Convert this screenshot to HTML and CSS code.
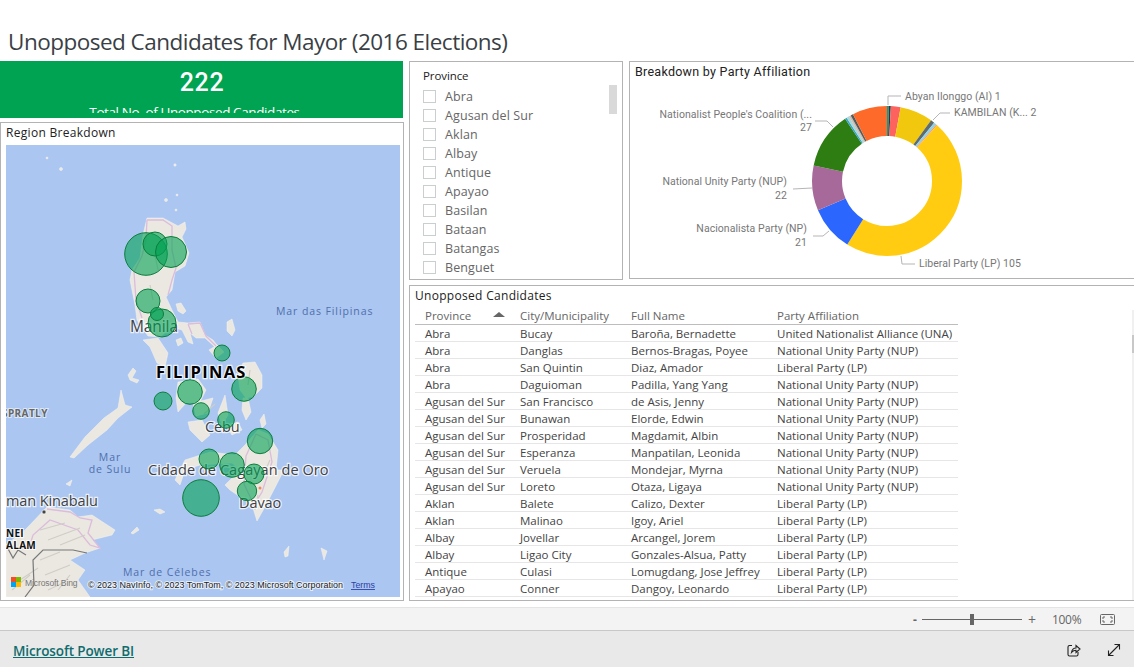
FILE: index.html
```html
<!DOCTYPE html>
<html lang="en">
<head>
<meta charset="utf-8">
<title>Unopposed Candidates for Mayor (2016 Elections)</title>
<link rel="stylesheet" href="styles.css">
</head>
<body>
<main class="canvas">
  <h1 class="page-title">Unopposed Candidates for Mayor (2016 Elections)</h1>
  <div class="board">
    <div class="left-col">
      <section class="kpi">
        <div class="kpi-clip">
          <div class="kpi-value">222</div>
          <div class="kpi-label">Total No. of Unopposed Candidates</div>
        </div>
      </section>
      <section class="tile region">
        <h2 class="tile-title">Region Breakdown</h2>
        <svg class="map" viewBox="6 145 394 452" width="394" height="452" role="img" aria-label="Map of the Philippines">
          <rect class="sea" x="6" y="145" width="394" height="452"/>
          <g class="land">
            <path d="M147 218 163 218 178 226 185 222 186 229 182 237 189 253 185 266 175 272 172 290 166 297 172 310 178 322 188 323 200 322 205 335 213 340 220 349 216 348 205 338 196 338 190 333 193 344 188 342 182 330 172 327 160 337 148 336 137 320 135 305 130 280 132 270 140 258 143 235Z"/>
            <path d="M143 340 158 338 168 353 165 367 157 363 150 347Z"/>
            <path d="M243 363 255 362 262 375 262 388 254 396 246 398 240 390 238 375Z"/>
            <path d="M243 398 248 398 251 412 246 420 242 410Z"/>
            <path d="M178 382 198 379 206 390 200 402 186 403 178 412 176 398Z"/>
            <path d="M193 403 213 398 208 413 196 416Z"/>
            <path d="M188 422 202 420 210 435 202 442 190 430Z"/>
            <path d="M218 413 225 395 228 415 222 425Z"/>
            <path d="M226 426 238 422 242 430 232 435Z"/>
            <path d="M258 430 268 434 278 450 276 470 284 470 266 505 257 521 252 505 230 490 225 485 240 470 232 463 200 465 185 470 180 485 175 480 185 460 210 452 235 455 245 445Z"/>
            <path d="M70 457 85 437 104 418 118 408 121 390 125 405 132 407 118 418 107 430 88 445 74 458Z"/>
            <path d="M6 545 25 530 47 507 70 510 78 517 92 515 115 530 112 535 92 540 100 548 85 553 70 560 85 570 78 580 90 597 6 597Z"/>
            <path d="M176 304 181 303 186 311 183 314 178 311Z"/>
            <path d="M227 322 232 319 235 330 232 336 227 331Z"/>
            <path d="M176 340 181 338 183 343 178 346Z"/>
            <path d="M209 350 217 345 224 352 216 358Z"/>
            <path d="M128 375 133 368 136 371 132 378 139 380 137 383 130 380Z"/>
            <path d="M260 420 264 414 266 424 262 428Z"/>
            <path d="M154 510 160 509 165 512 160 514Z"/>
            <path d="M66 484 72 480 70 486Z"/>
            <path d="M131 533 137 527 139 530 133 534Z"/>
            <path d="M284 552 289 546 288 556 285 557Z"/>
            <path d="M321 548 327 551 324 560Z"/>
            <circle cx="47" cy="158" r="1"/><circle cx="61" cy="169" r="1.5"/><circle cx="175" cy="165" r="1.2"/>
            <circle cx="166" cy="200" r="1.5"/><circle cx="177" cy="195" r="1"/><circle cx="176" cy="210" r="1"/>
          </g>
          <g class="province-lines">
            <path d="M147 220 163 220 172 226 172 250 176 268 172 280 168 295M147 220 146 240 142 256 134 272 136 300 142 318"/>
            <path d="M188 324 200 323 206 336 216 346M188 324 192 334"/>
            <path d="M256 434 268 440 272 462 262 492 254 505 244 484 246 456 256 434"/>
            <path d="M47 509 70 512 80 518 92 520 88 533 100 548 90 545 78 530 50 520 33 535 30 545"/>
          </g>
          <g class="relief">
            <path d="M155 255 158 270M150 285 153 300M250 370 248 385M215 404 204 414M270 460 262 478M255 510 258 495M40 530 65 523M48 540 80 528M20 580 38 568M45 575 70 565M48 590 65 582M60 545 85 535M12 590 30 575M40 560 60 552M70 575 58 590"/>
          </g>
          <g class="country-border">
            <path d="M25 597 34 585 33 560 43 550 73 550 87 553"/>
            <path d="M6 545 13 558 18 550 26 555"/>
          </g>
          <text class="sea-label" x="276" y="315">Mar das Filipinas</text>
          <text class="sea-label" x="110" y="461" text-anchor="middle">Mar</text>
          <text class="sea-label" x="110" y="473" text-anchor="middle">de Sulu</text>
          <text class="sea-label" x="123" y="576">Mar de Célebes</text>
          <text class="region-label" x="2" y="417">SPRATLY</text>
          <text class="city-label city-big" x="130" y="332">Manila</text>
          <text class="city-label" x="205" y="432">Cebu</text>
          <text class="city-label city-wide" x="148" y="475">Cidade de Cagayan de Oro</text>
          <text class="city-label" x="239" y="508">Davao</text>
          <text class="city-label" x="6" y="506">man Kinabalu</text>
          <circle class="city-dot" cx="44" cy="512" r="2"/>
          <circle class="city-dot-orange" cx="260" cy="488" r="1.5"/>
          <text class="small-country" x="6" y="537">NEI</text>
          <text class="small-country" x="6" y="549">ALAM</text>
          <g class="bubbles">
            <circle cx="146" cy="254" r="21.3"/><circle cx="155" cy="244" r="12"/><circle cx="171" cy="252" r="15.5"/>
            <circle cx="148" cy="301" r="12"/><circle cx="162" cy="323" r="14"/><circle cx="157" cy="314" r="6.5"/>
            <circle cx="222" cy="353" r="8"/><circle cx="190" cy="392" r="12.3"/><circle cx="244" cy="389" r="12.3"/>
            <circle cx="163" cy="401" r="9"/><circle cx="201" cy="411" r="8.3"/><circle cx="226" cy="420" r="8.3"/>
            <circle cx="260" cy="441" r="12.7"/><circle cx="209" cy="459" r="10"/><circle cx="232" cy="465" r="12.3"/>
            <circle cx="254" cy="474" r="10"/><circle cx="247" cy="491" r="9.7"/><circle cx="201" cy="498" r="18.3"/>
          </g>
          <text class="country-label" x="156" y="378">FILIPINAS</text>
          <rect class="ms-red" x="11" y="577" width="5" height="5"/>
          <rect class="ms-green" x="16" y="577" width="5" height="5"/>
          <rect class="ms-blue" x="11" y="582" width="5" height="5"/>
          <rect class="ms-yellow" x="16" y="582" width="5" height="5"/>
          <text class="bing-label" x="25" y="586">Microsoft Bing</text>
          <text class="attribution" x="88" y="588">© 2023 NavInfo, © 2023 TomTom, © 2023 Microsoft Corporation</text>
          <text class="terms" x="351" y="588">Terms</text>
        </svg>
      </section>
    </div>

    <div class="right-col">
      <div class="top-row">
        <section class="tile slicer">
          <h2 class="slicer-title">Province</h2>
          <ul class="slicer-list">
            <li><span class="check"></span>Abra</li>
            <li><span class="check"></span>Agusan del Sur</li>
            <li><span class="check"></span>Aklan</li>
            <li><span class="check"></span>Albay</li>
            <li><span class="check"></span>Antique</li>
            <li><span class="check"></span>Apayao</li>
            <li><span class="check"></span>Basilan</li>
            <li><span class="check"></span>Bataan</li>
            <li><span class="check"></span>Batangas</li>
            <li><span class="check"></span>Benguet</li>
          </ul>
          <span class="slicer-thumb"></span>
        </section>
        <section class="tile party">
          <h2 class="party-title">Breakdown by Party Affiliation</h2>
          <svg class="donut" viewBox="630 80 504 198" width="504" height="198" role="img" aria-label="Donut chart by party">
            <g class="rings" fill="none" stroke-width="30" transform="rotate(-90 887 180)">
              <circle cx="887" cy="180" r="60" pathLength="360" stroke="#0f9d8c" stroke-dasharray="1.5 360"/>
              <circle cx="887" cy="180" r="60" pathLength="360" stroke="#1f3a3a" stroke-dasharray="1.5 360" stroke-dashoffset="-1.5"/>
              <circle cx="887" cy="180" r="60" pathLength="360" stroke="#fd625e" stroke-dasharray="7.5 360" stroke-dashoffset="-3"/>
              <circle cx="887" cy="180" r="60" pathLength="360" stroke="#f2c80f" stroke-dasharray="25.5 360" stroke-dashoffset="-10.5"/>
              <circle cx="887" cy="180" r="60" pathLength="360" stroke="#5f6b6d" stroke-dasharray="3 360" stroke-dashoffset="-36"/>
              <circle cx="887" cy="180" r="60" pathLength="360" stroke="#8ad4eb" stroke-dasharray="2 360" stroke-dashoffset="-39"/>
              <circle cx="887" cy="180" r="60" pathLength="360" stroke="#fe9666" stroke-dasharray="1 360" stroke-dashoffset="-41"/>
              <circle cx="887" cy="180" r="60" pathLength="360" stroke="#ffcc12" stroke-dasharray="170 360" stroke-dashoffset="-42"/>
              <circle cx="887" cy="180" r="60" pathLength="360" stroke="#2b67ff" stroke-dasharray="35 360" stroke-dashoffset="-212"/>
              <circle cx="887" cy="180" r="60" pathLength="360" stroke="#a66999" stroke-dasharray="35 360" stroke-dashoffset="-247"/>
              <circle cx="887" cy="180" r="60" pathLength="360" stroke="#2e7d12" stroke-dasharray="44 360" stroke-dashoffset="-282"/>
              <circle cx="887" cy="180" r="60" pathLength="360" stroke="#3aa6c4" stroke-dasharray="1.5 360" stroke-dashoffset="-326"/>
              <circle cx="887" cy="180" r="60" pathLength="360" stroke="#a8d8d8" stroke-dasharray="2 360" stroke-dashoffset="-327.5"/>
              <circle cx="887" cy="180" r="60" pathLength="360" stroke="#d6b8b0" stroke-dasharray="1.5 360" stroke-dashoffset="-329.5"/>
              <circle cx="887" cy="180" r="60" pathLength="360" stroke="#4f5f5f" stroke-dasharray="2 360" stroke-dashoffset="-331"/>
              <circle cx="887" cy="180" r="60" pathLength="360" stroke="#fe6a2a" stroke-dasharray="27 360" stroke-dashoffset="-333"/>
            </g>
            <g class="leaders" fill="none">
              <path d="M888 104V95H901"/>
              <path d="M933 119 940 112H950"/>
              <path d="M815 120H827L833 126"/>
              <path d="M793 188 812 187"/>
              <path d="M813 235H823L829 230"/>
              <path d="M901 255 902 263H915"/>
            </g>
            <g class="chart-labels">
              <text x="905" y="99">Abyan Ilonggo (AI) 1</text>
              <text x="954" y="115">KAMBILAN (K... 2</text>
              <text x="812" y="117" text-anchor="end">Nationalist People's Coalition (...</text>
              <text x="812" y="130" text-anchor="end">27</text>
              <text x="787" y="184" text-anchor="end">National Unity Party (NUP)</text>
              <text x="787" y="198" text-anchor="end">22</text>
              <text x="807" y="231" text-anchor="end">Nacionalista Party (NP)</text>
              <text x="807" y="245" text-anchor="end">21</text>
              <text x="919" y="266">Liberal Party (LP) 105</text>
            </g>
          </svg>
        </section>
      </div>
      <section class="tile candidates">
        <h2 class="tile-title">Unopposed Candidates</h2>
        <table class="grid">
          <colgroup><col class="c1"><col class="c2"><col class="c3"><col class="c4"></colgroup>
          <thead>
            <tr><th class="sorted">Province<span class="sort-arrow"></span></th><th>City/Municipality</th><th>Full Name</th><th>Party Affiliation</th></tr>
          </thead>
          <tbody>
            <tr><td>Abra</td><td>Bucay</td><td>Baroña, Bernadette</td><td>United Nationalist Alliance (UNA)</td></tr>
            <tr><td>Abra</td><td>Danglas</td><td>Bernos-Bragas, Poyee</td><td>National Unity Party (NUP)</td></tr>
            <tr><td>Abra</td><td>San Quintin</td><td>Diaz, Amador</td><td>Liberal Party (LP)</td></tr>
            <tr><td>Abra</td><td>Daguioman</td><td>Padilla, Yang Yang</td><td>National Unity Party (NUP)</td></tr>
            <tr><td>Agusan del Sur</td><td>San Francisco</td><td>de Asis, Jenny</td><td>National Unity Party (NUP)</td></tr>
            <tr><td>Agusan del Sur</td><td>Bunawan</td><td>Elorde, Edwin</td><td>National Unity Party (NUP)</td></tr>
            <tr><td>Agusan del Sur</td><td>Prosperidad</td><td>Magdamit, Albin</td><td>National Unity Party (NUP)</td></tr>
            <tr><td>Agusan del Sur</td><td>Esperanza</td><td>Manpatilan, Leonida</td><td>National Unity Party (NUP)</td></tr>
            <tr><td>Agusan del Sur</td><td>Veruela</td><td>Mondejar, Myrna</td><td>National Unity Party (NUP)</td></tr>
            <tr><td>Agusan del Sur</td><td>Loreto</td><td>Otaza, Ligaya</td><td>National Unity Party (NUP)</td></tr>
            <tr><td>Aklan</td><td>Balete</td><td>Calizo, Dexter</td><td>Liberal Party (LP)</td></tr>
            <tr><td>Aklan</td><td>Malinao</td><td>Igoy, Ariel</td><td>Liberal Party (LP)</td></tr>
            <tr><td>Albay</td><td>Jovellar</td><td>Arcangel, Jorem</td><td>Liberal Party (LP)</td></tr>
            <tr><td>Albay</td><td>Ligao City</td><td>Gonzales-Alsua, Patty</td><td>Liberal Party (LP)</td></tr>
            <tr><td>Antique</td><td>Culasi</td><td>Lomugdang, Jose Jeffrey</td><td>Liberal Party (LP)</td></tr>
            <tr><td>Apayao</td><td>Conner</td><td>Dangoy, Leonardo</td><td>Liberal Party (LP)</td></tr>
          </tbody>
        </table>
        <span class="table-scroll"><span class="table-scroll-thumb"></span></span>
      </section>
    </div>
  </div>
</main>

<div class="zoom-bar">
  <span class="zoom-minus">-</span>
  <span class="zoom-track"><span class="zoom-thumb"></span></span>
  <span class="zoom-plus">+</span>
  <span class="zoom-value">100%</span>
  <svg class="fit-icon" viewBox="0 0 15 11" width="15" height="11" fill="none">
    <rect x="0.5" y="0.5" width="14" height="10" rx="1"/>
    <path d="M5 3H3V5M10 3H12V5M5 8H3V6M10 8H12V6"/>
  </svg>
</div>

<footer class="footer">
  <a class="brand" href="#">Microsoft Power BI</a>
  <div class="footer-icons">
    <svg class="f-icon" viewBox="0 0 14 14" width="14" height="14" fill="none">
      <path d="M5 2.5H2.5a1.5 1.5 0 0 0-1.5 1.5v7.500a1.500 1.500 0 0 0 1.500 1.500h7a1.500 1.500 0 0 0 1.500-1.500V9"/>
      <path d="M4.500 9.500C5 6.500 6.800 5 9 5V2.500L13 6 9 9.500V7.200C7.200 7.200 5.800 8 4.500 9.500Z"/>
    </svg>
    <svg class="f-icon" viewBox="0 0 14 14" width="14" height="14" fill="none">
      <path d="M1.500 12.500 12.500 1.500M7.500 1.500H12.500V6.500M1.500 7.500V12.500H6.500"/>
    </svg>
  </div>
</footer>
</body>
</html>
```
FILE: styles.css
```css
* { box-sizing: border-box; }
html, body { margin: 0; padding: 0; }
body {
  width: 1134px;
  height: 667px;
  overflow: hidden;
  background: #fff;
  font-family: "Open Sans", "Noto Sans", sans-serif;
  color: #333;
  display: flex;
  flex-direction: column;
}
h1, h2, ul { margin: 0; padding: 0; font-weight: 400; }
ul { list-style: none; }

.canvas { height: 607px; flex: none; overflow: hidden; padding-top: 26px; }
.page-title {
  height: 35px;
  padding-left: 8px;
  font-size: 22.5px;
  line-height: 32px;
  letter-spacing: -0.52px;
  color: #3a3f46;
  white-space: nowrap;
  overflow: hidden;
}
.board { display: grid; grid-template-columns: 404px 725px; column-gap: 5px; }
.left-col { display: flex; flex-direction: column; gap: 4px; }
.right-col { display: flex; flex-direction: column; gap: 5px; }
.top-row { display: flex; gap: 6px; }

.tile { border: 1px solid #b3b3b3; background: #fff; position: relative; }
.tile-title {
  font-size: 12px;
  line-height: 16px;
  letter-spacing: 0.3px;
  color: #222;
  white-space: nowrap;
}

.kpi { height: 57px; width: 403px; background: #00a352; color: #fff; text-align: center; }
.kpi-clip { height: 52px; overflow: hidden; padding-top: 7px; }
.kpi-value { font-family: Roboto, sans-serif; font-size: 25px; line-height: 30px; font-weight: 500; letter-spacing: 0.6px; padding-left: 1px; }
.kpi-label { margin-top: 6px; padding-right: 14px; font-size: 13.5px; line-height: 17px; letter-spacing: -0.4px; }

.region { height: 479px; padding: 1px 3px 3px 5px; display: flex; flex-direction: column; }
.region .tile-title { height: 22px; line-height: 18px; }
.map { display: block; flex: none; overflow: hidden; }
.sea { fill: #abc6f0; }
.land { fill: #ebe8e1; stroke: #f6f5f0; stroke-width: .5; }
.province-lines { fill: none; stroke: #dcbcdc; stroke-width: 1.3; }
.relief { fill: none; stroke: #cfcdc6; stroke-width: 1.2; }
.country-border { fill: none; stroke: #777; stroke-width: 1.2; }
.bubbles { fill: #01a154; fill-opacity: .6; stroke: #0d7d3c; stroke-width: 1; }
.sea-label { font-size: 10.500px; letter-spacing: .9px; fill: #4f6fae; }
.region-label { font-size: 10px; font-weight: 700; letter-spacing: .4px; fill: #666; paint-order: stroke; stroke: #fff; stroke-width: 2px; stroke-opacity: .6; }
.city-label { font-size: 14.500px; letter-spacing: -0.1px; fill: #3e4144; paint-order: stroke; stroke: #fff; stroke-width: 2.500px; stroke-opacity: .75; }
.city-big { font-size: 15.500px; }
.city-wide { letter-spacing: 0.06px; }
.country-label { font-size: 16.500px; font-weight: 700; letter-spacing: 1.300px; fill: #000; paint-order: stroke; stroke: #fff; stroke-width: 2.500px; stroke-opacity: .8; }
.small-country { font-size: 10px; font-weight: 700; letter-spacing: .3px; fill: #111; paint-order: stroke; stroke: #fff; stroke-width: 2px; stroke-opacity: .8; }
.city-dot { fill: #444; stroke: #fff; stroke-width: .6; }
.city-dot-orange { fill: #ef8a5a; }
.ms-red { fill: #f25022; }
.ms-green { fill: #7fba00; }
.ms-blue { fill: #00a4ef; }
.ms-yellow { fill: #ffb900; }
.bing-label { font-family: "Liberation Sans", sans-serif; font-size: 8.500px; letter-spacing: -0.1px; fill: #777; }
.attribution { font-family: "Liberation Sans", sans-serif; font-size: 8.970px; fill: #222; paint-order: stroke; stroke: #fff; stroke-width: 2px; stroke-opacity: .7; }
.terms { font-family: "Liberation Sans", sans-serif; font-size: 8.800px; fill: #2c3fa8; text-decoration: underline; }

.slicer { width: 214px; height: 219px; padding: 5px 0 0 13px; }
.slicer-title { font-size: 11.500px; line-height: 17px; letter-spacing: -0.1px; color: #222; margin-bottom: 3px; }
.slicer-list li { height: 19px; display: flex; align-items: center; gap: 9px; font-size: 12.500px; letter-spacing: 0.1px; color: #666; white-space: nowrap; }
.check { width: 13px; height: 13px; flex: none; border: 1px solid #c9cfcf; }
.slicer-thumb { position: absolute; left: 199px; top: 23px; width: 8px; height: 29px; background: #d9d9d9; }

.party { width: 505px; height: 218px; border-right: 0; overflow: hidden; padding: 2px 0 0 5px; }
.party-title { font-family: Roboto, sans-serif; font-size: 12.500px; line-height: 15px; letter-spacing: .27px; color: #222; white-space: nowrap; height: 17px; }
.donut { display: block; margin-left: -5px; }
.leaders { stroke: #b5b5b5; stroke-width: 1; }
.chart-labels { font-family: Roboto, sans-serif; font-size: 10.500px; letter-spacing: .05px; fill: #777; }

.candidates { height: 316px; border-right: 0; padding: 2px 0 0 5px; }
.candidates .tile-title { height: 18px; line-height: 16px; }
.grid { border-collapse: collapse; table-layout: fixed; width: 543px; font-size: 11.500px; line-height: 14px; color: #444; }
.c1 { width: 95px; }
.c2 { width: 111px; }
.c3 { width: 146px; }
.c4 { width: 191px; }
.grid th, .grid td { padding: 0 0 0 10px; text-align: left; font-weight: 400; white-space: nowrap; overflow: hidden; letter-spacing: 0; }
.grid th { height: 18px; padding-top: 3px; color: #666; border-bottom: 1px solid #bdbdbd; position: relative; }
.grid td { height: 17px; padding-top: 2px; border-bottom: 1px solid #e6e6e6; }
.sort-arrow { position: absolute; left: 78px; top: 6px; border-left: 6px solid transparent; border-right: 6px solid transparent; border-bottom: 5px solid #666; }
.table-scroll { position: absolute; right: 0; top: 24px; bottom: 0; width: 2px; background: #f0f0f0; }
.table-scroll-thumb { display: block; margin-top: 25px; height: 18px; background: #c8c8c8; }

.zoom-bar {
  height: 24px;
  flex: none;
  background: #f3f3f3;
  border-top: 1px solid #e4e4e4;
  border-bottom: 1px solid #c8c8c8;
  display: flex;
  align-items: center;
  justify-content: flex-end;
  padding-right: 19px;
  font-size: 12px;
  color: #666;
}
.zoom-minus { font-weight: 700; width: 9px; }
.zoom-track { width: 100px; height: 1px; background: #666; position: relative; }
.zoom-thumb { position: absolute; left: 48px; top: -5px; width: 4px; height: 11px; background: #666; }
.zoom-plus { width: 16px; margin-left: 6px; font-size: 14px; }
.zoom-value { width: 48px; margin-left: 8px; letter-spacing: -0.3px; }
.fit-icon { stroke: #666; stroke-width: 1; }

.footer {
  flex: 1;
  background: #e9e9e9;
  display: flex;
  align-items: center;
  justify-content: space-between;
  padding: 2px 13px 0 13px;
}
.brand { font-size: 13.500px; font-weight: 600; letter-spacing: -0.12px; padding-top: 2px; color: #0f6c6e; }
.footer-icons { display: flex; gap: 26px; }
.f-icon { stroke: #222; stroke-width: 1.100px; }
```
